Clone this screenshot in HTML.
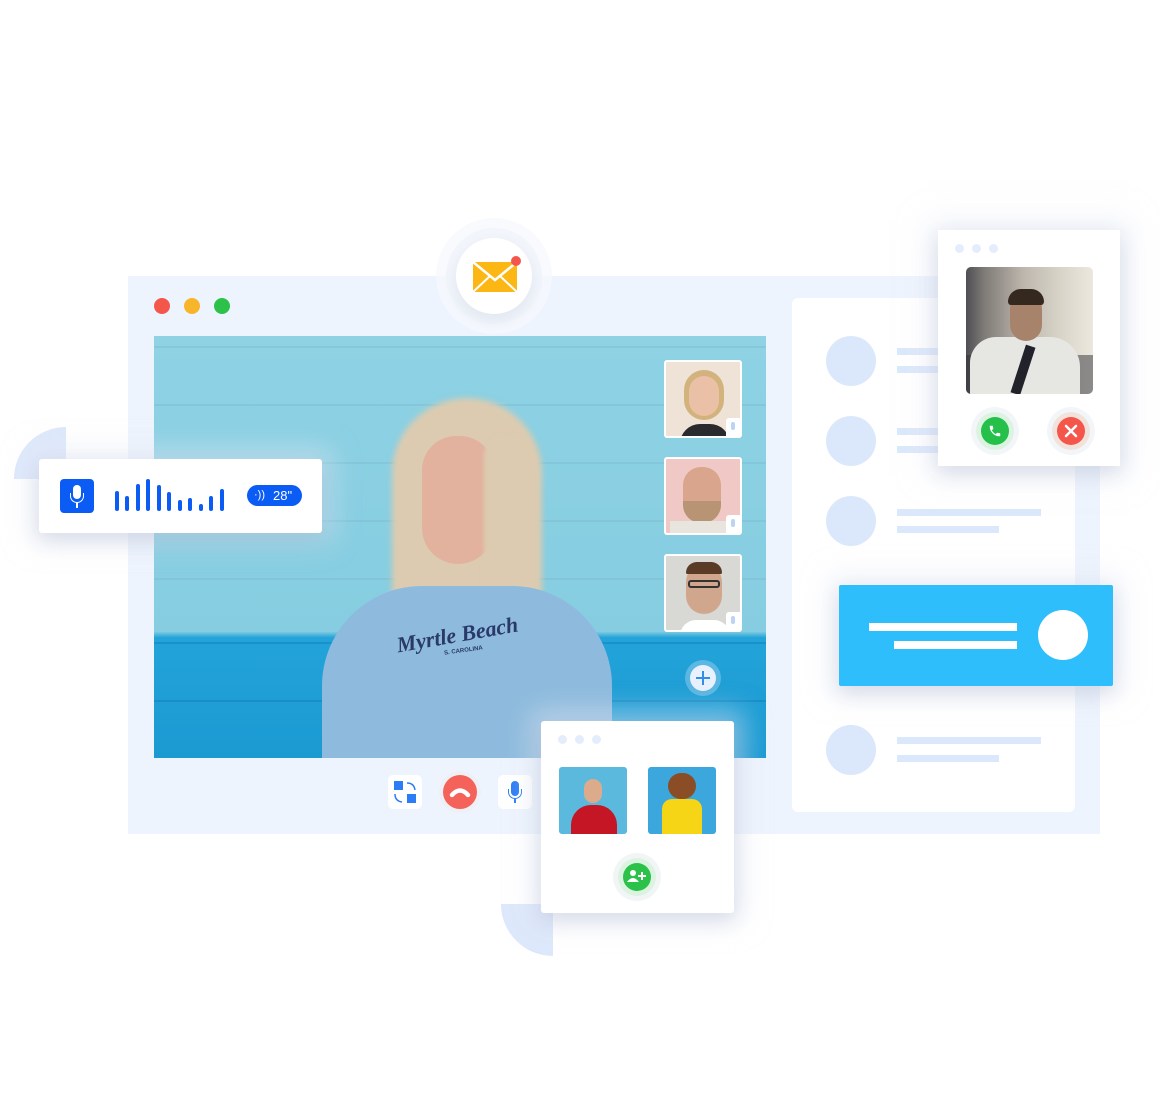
<!DOCTYPE html>
<html><head><meta charset="utf-8"><style>
*{margin:0;padding:0;box-sizing:border-box}
body{width:1160px;height:1104px;background:#fff;position:relative;overflow:hidden;font-family:"Liberation Sans",sans-serif}
.a{position:absolute}
.sh{box-shadow:0 8px 20px rgba(40,60,110,.12),0 0 26px 10px rgba(225,232,244,.55)}
.circ{border-radius:50%}
.bar{position:absolute;background:#0a5cf5;width:4px;border-radius:2px;bottom:0}
.line{position:absolute;height:7px;background:#dbe8fb}
.dot{position:absolute;width:9px;height:9px;border-radius:50%;background:#e4edfb}
.mic{position:absolute;right:0;bottom:0;width:14px;height:18px;background:#fff;border-radius:3px 0 0 0}
.mic:after{content:"";position:absolute;left:5px;top:4px;width:4px;height:8px;border-radius:2px;background:#bcd3f5}
</style></head><body>
<div class="a" style="left:14px;top:427px;width:52px;height:52px;border-radius:52px 0 0 0;background:#dde8fb"></div>
<div class="a" style="left:501px;top:904px;width:52px;height:52px;border-radius:0 0 0 52px;background:#dde8fb"></div>
<div class="a" style="left:128px;top:276px;width:972px;height:558px;background:#eef4fd"></div>
<div class="a circ" style="left:154px;top:298px;width:16px;height:16px;background:#f5564c"></div>
<div class="a circ" style="left:184px;top:298px;width:16px;height:16px;background:#f7b52a"></div>
<div class="a circ" style="left:214px;top:298px;width:16px;height:16px;background:#2cc24a"></div>
<div class="a" style="left:154px;top:336px;width:612px;height:422px;overflow:hidden;background:linear-gradient(#8ed2e4 0%,#86cde1 70%,#22a3d9 71.5%,#1b9ad2 100%)">
  <div class="a" style="left:0;top:0;width:612px;height:300px;background:repeating-linear-gradient(0deg,transparent 0 56px,rgba(120,180,200,.35) 56px 58px)"></div>
  <div class="a" style="left:0;top:302px;width:612px;height:120px;background:repeating-linear-gradient(0deg,transparent 0 56px,rgba(20,110,170,.35) 56px 58px)"></div>
  <div class="a" style="left:238px;top:62px;width:150px;height:270px;border-radius:75px 75px 50px 40px;background:#dccbb0;filter:blur(3px)"></div>
  <div class="a" style="left:268px;top:100px;width:72px;height:128px;border-radius:36px 36px 38px 38px;background:#e2b29e"></div>
  <div class="a" style="left:330px;top:100px;width:50px;height:200px;border-radius:20px;background:#dccbb0;filter:blur(2px)"></div>
  <div class="a" style="left:168px;top:250px;width:290px;height:200px;border-radius:100px 100px 0 0;background:#8ebbdd"></div>
  <div class="a" style="left:242px;top:286px;font:italic bold 22px 'Liberation Serif',serif;color:#2a3a68;transform:rotate(-10deg)">Myrtle Beach</div>
  <div class="a" style="left:290px;top:312px;font:bold 6px 'Liberation Sans',sans-serif;color:#2a3a68;transform:rotate(-8deg)">S. CAROLINA</div>
</div>
<div class="a" style="left:664px;top:360px;width:78px;height:78px;border:2px solid #fff;border-radius:3px;overflow:hidden;background:#efe3d8">
  <div class="a" style="left:18px;top:8px;width:40px;height:50px;border-radius:20px;background:#d2b27d"></div>
  <div class="a" style="left:23px;top:14px;width:30px;height:40px;border-radius:15px;background:#eac1a6"></div>
  <div class="a" style="left:14px;top:62px;width:50px;height:20px;border-radius:20px 20px 0 0;background:#2a2a2e"></div><div class="mic"></div>
</div>
<div class="a" style="left:664px;top:457px;width:78px;height:78px;border:2px solid #fff;border-radius:3px;overflow:hidden;background:#f0c9c7">
  <div class="a" style="left:17px;top:8px;width:38px;height:52px;border-radius:18px;background:#d9a58c"></div>
  <div class="a" style="left:17px;top:42px;width:38px;height:22px;border-radius:0 0 18px 18px;background:#b89374"></div>
  <div class="a" style="left:4px;top:62px;width:66px;height:20px;background:#e8e5df"></div><div class="mic"></div>
</div>
<div class="a" style="left:664px;top:554px;width:78px;height:78px;border:2px solid #fff;border-radius:3px;overflow:hidden;background:#d8d8d5">
  <div class="a" style="left:20px;top:8px;width:36px;height:50px;border-radius:18px;background:#d0a78d"></div>
  <div class="a" style="left:20px;top:6px;width:36px;height:12px;border-radius:18px 18px 2px 2px;background:#5a3b25"></div>
  <div class="a" style="left:22px;top:24px;width:32px;height:8px;border:2px solid #333;border-radius:3px"></div>
  <div class="a" style="left:14px;top:64px;width:50px;height:16px;border-radius:20px 20px 0 0;background:#fff"></div><div class="mic"></div>
</div>
<div class="a circ" style="left:690px;top:665px;width:26px;height:26px;background:#e8f1fd;box-shadow:0 0 0 5px rgba(200,225,245,.35)">
  <div class="a" style="left:6px;top:12px;width:14px;height:2px;background:#2f8ee8"></div>
  <div class="a" style="left:12px;top:6px;width:2px;height:14px;background:#2f8ee8"></div>
</div>
<div class="a" style="left:388px;top:775px;width:34px;height:34px;background:#fff;border-radius:5px">
  <div class="a" style="left:6px;top:6px;width:9px;height:9px;background:#2b7cf5"></div>
  <div class="a" style="left:19px;top:19px;width:9px;height:9px;background:#2b7cf5"></div>
  <svg class="a" style="left:0;top:0" width="34" height="34"><path d="M19 8 q7 0 8 7 M7 19 q0 7 7 8" fill="none" stroke="#2b7cf5" stroke-width="1.5"/></svg>
</div>
<div class="a circ" style="left:443px;top:775px;width:34px;height:34px;background:#f4625a;box-shadow:0 0 0 4px #eef0f5">
  <svg class="a" style="left:0;top:0" width="34" height="34"><path d="M9 20 q8 -9 16 0" fill="none" stroke="#fff" stroke-width="4.5" stroke-linecap="round"/></svg>
</div>
<div class="a" style="left:498px;top:775px;width:34px;height:34px;background:#fff;border-radius:5px">
  <div class="a" style="left:13px;top:6px;width:8px;height:15px;border-radius:4px;background:#2b7cf5"></div>
  <div class="a" style="left:10px;top:14px;width:14px;height:10px;border:1.5px solid #2b7cf5;border-top:none;border-radius:0 0 8px 8px"></div>
  <div class="a" style="left:16px;top:24px;width:2px;height:4px;background:#2b7cf5"></div>
</div>
<div class="a" style="left:792px;top:298px;width:283px;height:514px;background:#fff;border-radius:6px"></div>
<div class="a circ" style="left:826px;top:336px;width:50px;height:50px;background:#dbe8fb"></div>
<div class="a circ" style="left:826px;top:416px;width:50px;height:50px;background:#dbe8fb"></div>
<div class="a circ" style="left:826px;top:496px;width:50px;height:50px;background:#dbe8fb"></div>
<div class="a circ" style="left:826px;top:725px;width:50px;height:50px;background:#dbe8fb"></div>
<div class="line" style="left:897px;top:348px;width:144px"></div><div class="line" style="left:897px;top:366px;width:102px"></div>
<div class="line" style="left:897px;top:428px;width:144px"></div><div class="line" style="left:897px;top:446px;width:102px"></div>
<div class="line" style="left:897px;top:509px;width:144px"></div><div class="line" style="left:897px;top:526px;width:102px"></div>
<div class="line" style="left:897px;top:737px;width:144px"></div><div class="line" style="left:897px;top:755px;width:102px"></div>
<div class="a sh" style="left:839px;top:585px;width:274px;height:101px;background:#2ebefc;border-radius:2px">
  <div class="a" style="left:30px;top:38px;width:148px;height:8px;background:#fff"></div>
  <div class="a" style="left:55px;top:56px;width:123px;height:8px;background:#fff"></div>
  <div class="a circ" style="left:199px;top:25px;width:50px;height:50px;background:#fff"></div>
</div>
<div class="a sh" style="left:938px;top:230px;width:182px;height:236px;background:#fff">
  <div class="dot" style="left:17px;top:14px"></div><div class="dot" style="left:34px;top:14px"></div><div class="dot" style="left:51px;top:14px"></div>
  <div class="a" style="left:28px;top:37px;width:127px;height:127px;border-radius:5px;overflow:hidden;background:linear-gradient(90deg,#4e4e54 0%,#7e7a76 14%,#bdb6ad 45%,#d6d2c6 72%,#ece8df 100%)">
    <div class="a" style="left:0;top:88px;width:127px;height:40px;background:#2e2e33;opacity:.5"></div>
    <div class="a" style="left:4px;top:70px;width:110px;height:58px;border-radius:26px 30px 0 0;background:#e6e6e3"></div>
    <div class="a" style="left:44px;top:26px;width:32px;height:48px;border-radius:16px;background:#a8836c"></div>
    <div class="a" style="left:42px;top:22px;width:36px;height:16px;border-radius:16px 16px 4px 4px;background:#35291f"></div>
    <div class="a" style="left:52px;top:78px;width:10px;height:50px;background:#22232a;transform:rotate(18deg)"></div>
  </div>
  <div class="a circ" style="left:43px;top:187px;width:28px;height:28px;background:#25c04a;box-shadow:0 0 0 5px #ddf3e1,0 0 0 10px #f3f6f8">
    <svg class="a" style="left:7px;top:7px" width="14" height="14" viewBox="0 0 24 24"><path fill="#fff" d="M6.6 10.8c1.4 2.8 3.8 5.1 6.6 6.6l2.2-2.2c.3-.3.7-.4 1-.2 1.1.4 2.3.6 3.6.6.6 0 1 .4 1 1V20c0 .6-.4 1-1 1C10.6 21 3 13.4 3 4c0-.6.4-1 1-1h3.5c.6 0 1 .4 1 1 0 1.3.2 2.5.6 3.6.1.3 0 .7-.2 1L6.6 10.8z"/></svg>
  </div>
  <div class="a circ" style="left:119px;top:187px;width:28px;height:28px;background:#f5564c;box-shadow:0 0 0 5px #f1e3dc,0 0 0 10px #f3f6f8">
    <svg class="a" style="left:7px;top:7px" width="14" height="14"><path d="M2 2 L12 12 M12 2 L2 12" stroke="#fff" stroke-width="2.5" stroke-linecap="round"/></svg>
  </div>
</div>
<div class="a circ" style="left:456px;top:238px;width:76px;height:76px;background:#fff;box-shadow:0 6px 14px rgba(40,60,110,.08),0 0 0 10px rgba(240,244,250,.8),0 0 0 20px rgba(246,248,252,.7)">
  <svg class="a" style="left:16px;top:22px" width="46" height="34" viewBox="0 0 46 34"><rect x="1" y="2" width="44" height="30" fill="#fdb714"/><path d="M1 2 L23 20 L45 2" fill="none" stroke="#fff" stroke-width="2.5"/><path d="M1 32 L18 16 M45 32 L28 16" stroke="#fff" stroke-width="2"/></svg>
  <div class="a circ" style="left:55px;top:18px;width:10px;height:10px;background:#f5564c"></div>
</div>
<div class="a sh" style="left:39px;top:459px;width:283px;height:74px;background:#fff;border-radius:3px">
  <div class="a" style="left:21px;top:20px;width:34px;height:34px;border-radius:4px;background:#0a5cf5">
    <div class="a" style="left:13px;top:6px;width:8px;height:14px;border-radius:4px;background:#fff"></div>
    <div class="a" style="left:10px;top:14px;width:14px;height:10px;border:1.5px solid #fff;border-top:none;border-radius:0 0 7px 7px"></div>
    <div class="a" style="left:16px;top:24px;width:2px;height:5px;background:#fff"></div>
  </div>
  <div class="a" style="left:76px;top:19px;width:130px;height:33px">
    <div class="bar" style="left:0;height:20px"></div><div class="bar" style="left:10px;height:15px"></div>
    <div class="bar" style="left:21px;height:27px"></div><div class="bar" style="left:31px;height:32px"></div>
    <div class="bar" style="left:42px;height:26px"></div><div class="bar" style="left:52px;height:19px"></div>
    <div class="bar" style="left:63px;height:11px"></div><div class="bar" style="left:73px;height:13px"></div>
    <div class="bar" style="left:84px;height:7px"></div><div class="bar" style="left:94px;height:15px"></div>
    <div class="bar" style="left:105px;height:22px"></div>
  </div>
  <div class="a" style="left:208px;top:26px;width:55px;height:21px;border-radius:11px;background:#0a5cf5;color:#fff;font-size:13px;line-height:21px;padding-left:26px">28"</div>
  <div class="a" style="left:215px;top:27px;color:#fff;font-size:11px;line-height:19px">&#183;))</div>
</div>
<div class="a sh" style="left:541px;top:721px;width:193px;height:192px;background:#fff;border-radius:3px">
  <div class="dot" style="left:17px;top:14px"></div><div class="dot" style="left:34px;top:14px"></div><div class="dot" style="left:51px;top:14px"></div>
  <div class="a" style="left:18px;top:46px;width:68px;height:67px;border-radius:3px;overflow:hidden;background:#5ab9dc">
    <div class="a" style="left:12px;top:38px;width:46px;height:40px;border-radius:20px 20px 0 0;background:#c41624"></div>
    <div class="a" style="left:25px;top:12px;width:18px;height:24px;border-radius:9px;background:#dbab8c"></div>
  </div>
  <div class="a" style="left:107px;top:46px;width:68px;height:67px;border-radius:3px;overflow:hidden;background:#3ca7dc">
    <div class="a" style="left:14px;top:32px;width:40px;height:40px;border-radius:10px 10px 0 0;background:#f6d416"></div>
    <div class="a" style="left:20px;top:6px;width:28px;height:26px;border-radius:14px;background:#8a4d26"></div>
  </div>
  <div class="a circ" style="left:82px;top:142px;width:28px;height:28px;background:#2cc24a;box-shadow:0 0 0 5px #dcf3e1,0 0 0 10px #f2f5f6">
    <svg class="a" style="left:4px;top:6px" width="20" height="16"><circle cx="6" cy="4" r="3" fill="#fff"/><path d="M0 13 q6 -8 12 0z" fill="#fff"/><path d="M15 3 v8 M11 7 h8" stroke="#fff" stroke-width="2"/></svg>
  </div>
</div>
</body></html>
